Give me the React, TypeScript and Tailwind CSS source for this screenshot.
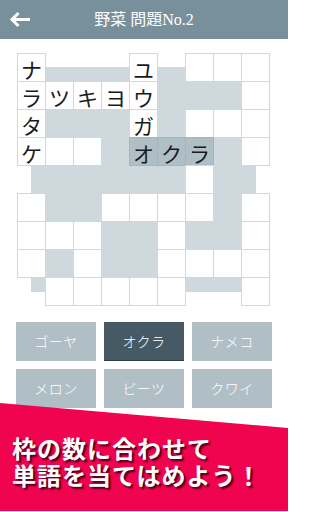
import React from "react";

// puzzle layout: "." = no cell, "w" = empty cell, "*x" = highlighted letter
const ROWS: string[][] = [
  ["ナ", ".", ".", ".", "ユ", ".", "w", "w", "w"],
  ["ラ", "ツ", "キ", "ヨ", "ウ", ".", ".", ".", "w"],
  ["タ", ".", ".", ".", "ガ", ".", "w", "w", "w"],
  ["ケ", "w", "w", ".", "*オ", "*ク", "*ラ", ".", "w"],
  [".", ".", ".", ".", ".", ".", "w", ".", "."],
  ["w", ".", ".", "w", "w", "w", "w", ".", "w"],
  ["w", "w", "w", ".", ".", "w", ".", ".", "w"],
  ["w", ".", "w", ".", ".", "w", "w", "w", "w"],
  [".", "w", "w", "w", "w", "w", ".", ".", "w"],
];

const CHOICES = ["ゴーヤ", "オクラ", "ナメコ", "メロン", "ビーツ", "クワイ"];

function Cell({ value }: { value: string }) {
  if (value === ".") return <div />;
  const highlighted = value.startsWith("*");
  const letter = value === "w" ? "" : value.replace("*", "");

  return (
    <div
      className={`w-[29px] h-[29px] border flex items-center justify-center pt-[3px] text-[21px] leading-none text-[#1b1b1b] ${
        highlighted
          ? "bg-[#b0bec5] border-[#a6b4bb]"
          : "bg-white border-[#cfd8dc]"
      }`}
    >
      {letter}
    </div>
  );
}

export default function App() {
  return (
    <div className="w-[288px] h-[512px] overflow-hidden bg-white font-['Noto_Sans_CJK_JP',sans-serif]">
      {/* Header */}
      <div className="h-[39px] bg-[#78909c] flex items-center px-[9px]">
        <svg width="22" height="17" viewBox="0 0 22 17" className="shrink-0">
          <path
            d="M21 8.5H3M9.5 2 3 8.5 9.5 15"
            fill="none"
            stroke="white"
            strokeWidth="3"
          />
        </svg>
        <div className="flex-1 text-center text-white text-[16px] font-['Liberation_Serif','Noto_Sans_CJK_JP',serif]">
          野菜 問題No.2
        </div>
        <div className="w-[22px] shrink-0" />
      </div>

      {/* Puzzle grid */}
      <div className="mt-[14px] ml-[17px] w-[253px] h-[253px] relative">
        <div className="absolute inset-[14px] bg-[#cfd8dc]" />
        <div className="relative grid grid-cols-[repeat(9,28px)] grid-rows-[repeat(9,28px)]">
          {ROWS.map((row, r) =>
            row.map((value, c) => <Cell key={`${r}-${c}`} value={value} />)
          )}
        </div>
      </div>

      {/* Answer choices */}
      <div className="mt-[16px] px-[16px] grid grid-cols-3 gap-[8px]">
        {CHOICES.map((word) => (
          <div
            key={word}
            className={`h-[39px] flex items-center justify-center text-[14px] font-light tracking-[0.5px] text-white ${
              word === "オクラ"
                ? "bg-[#455a64] border-b border-[#2f3e45]"
                : "bg-[#b0bec5]"
            }`}
          >
            {word}
          </div>
        ))}
      </div>

      {/* Promo banner */}
      <div className="-mt-[5px] h-[108px] bg-[#f0044f] [clip-path:polygon(0_0,100%_25px,100%_100%,0_100%)] pt-[31px] px-[12px]">
        <p className="text-white font-bold text-[24px] leading-[27px] tracking-[1px] [text-shadow:2px_2px_2px_#4a0012]">
          枠の数に合わせて
          <br />
          単語を当てはめよう！
        </p>
      </div>
    </div>
  );
}
